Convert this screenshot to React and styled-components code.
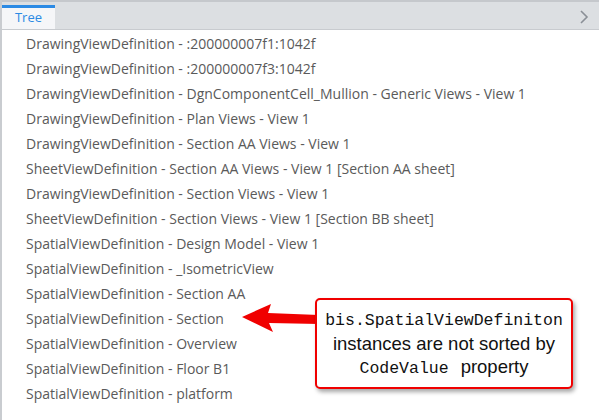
import React from 'react';
import styled, { createGlobalStyle } from 'styled-components';

const GlobalStyle = createGlobalStyle`
  html, body {
    margin: 0;
    padding: 0;
    background: #fff;
  }
`;

const rows = [
  'DrawingViewDefinition - :200000007f1:1042f',
  'DrawingViewDefinition - :200000007f3:1042f',
  'DrawingViewDefinition - DgnComponentCell_Mullion - Generic Views - View 1',
  'DrawingViewDefinition - Plan Views - View 1',
  'DrawingViewDefinition - Section AA Views - View 1',
  'SheetViewDefinition - Section AA Views - View 1 [Section AA sheet]',
  'DrawingViewDefinition - Section Views - View 1',
  'SheetViewDefinition - Section Views - View 1 [Section BB sheet]',
  'SpatialViewDefinition - Design Model - View 1',
  'SpatialViewDefinition - _IsometricView',
  'SpatialViewDefinition - Section AA',
  'SpatialViewDefinition - Section',
  'SpatialViewDefinition - Overview',
  'SpatialViewDefinition - Floor B1',
  'SpatialViewDefinition - platform',
];

function App() {
  return (
    <Panel>
      <GlobalStyle />
      <TabBar>
        <Tab active>Tree</Tab>
        <Chevron viewBox="0 0 10 16" width="10" height="16">
          <path d="M2 2 L8 8 L2 14" fill="none" stroke="#8a8f96" strokeWidth="1.6" />
        </Chevron>
      </TabBar>
      <List>
        {rows.map((r, i) => (
          <Row key={i}>{r}</Row>
        ))}
      </List>
      <Arrow viewBox="0 0 80 30" width="80" height="30">
        <polygon points="1,14 30,1 27,10 78,12 78,21 28,20 32,29" fill="#f00000" />
      </Arrow>
      <Callout>
        <Mono>bis.SpatialViewDefiniton</Mono>
        <Line>instances are not sorted by</Line>
        <Line>
          <Mono>CodeValue</Mono>
          <Gap />
          property
        </Line>
      </Callout>
    </Panel>
  );
}

const Panel = styled.div`
  position: relative;
  width: 599px;
  height: 420px;
  overflow: hidden;
  border-left: 2px solid #c9ccd0;
  box-sizing: border-box;
  font-family: 'Open Sans', sans-serif;
`;

const TabBar = styled.div`
  display: flex;
  align-items: flex-end;
  height: 30px;
  background: #dcdfe2;
  border-top: 2px solid #c5c8cc;
  border-bottom: 1px solid #c8cbcf;
  box-sizing: border-box;
  padding-right: 10px;
`;

const Tab = styled.div`
  width: 53px;
  height: 24px;
  box-sizing: border-box;
  background: #f5f6f8;
  border-top: 3px solid #2b8ae4;
  color: #2b8ae4;
  font-size: 13px;
  text-align: center;
  line-height: 18px;
`;

const Chevron = styled.svg`
  margin-left: auto;
  margin-bottom: 4px;
`;

const List = styled.div`
  display: flex;
  flex-direction: column;
  padding: 1px 0 0 24px;
`;

const Row = styled.div`
  height: 25px;
  line-height: 25px;
  font-size: 14px;
  color: #5a5a5a;
  white-space: nowrap;
`;

const Arrow = styled.svg`
  position: absolute;
  left: 239px;
  top: 303px;
`;

const Callout = styled.div`
  position: absolute;
  left: 313px;
  top: 298px;
  width: 258px;
  height: 91px;
  box-sizing: border-box;
  border: 2px solid #f00000;
  border-radius: 5px;
  background: #fff;
  box-shadow: 2px 3px 4px rgba(0, 0, 0, 0.35);
  display: flex;
  flex-direction: column;
  align-items: center;
  justify-content: center;
  padding-top: 1px;
  font-family: 'Liberation Sans', Arial, sans-serif;
  font-size: 18.5px;
  color: #111;
`;

const Mono = styled.span`
  font-family: 'Liberation Mono', monospace;
  font-size: 16.5px;
  line-height: 23px;
`;

const Gap = styled.span`
  display: inline-block;
  width: 12px;
`;

const Line = styled.div`
  line-height: 23px;
  white-space: nowrap;
`;

export default App;
